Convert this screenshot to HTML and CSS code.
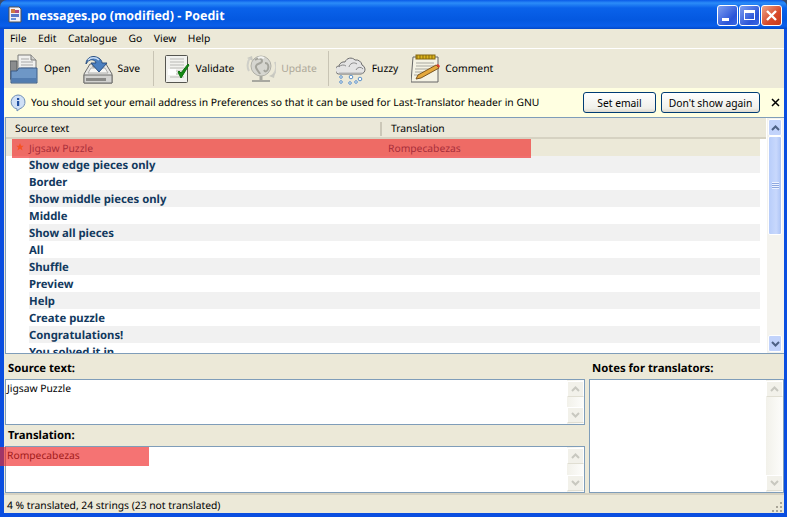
FILE: index.html
```html
<!DOCTYPE html>
<html lang="en">
<head>
    <meta charset="UTF-8">
    <title>messages.po (modified) - Poedit</title>
    <link rel="stylesheet" href="styles.css">
</head>
<body>
<div class="window">
    <div class="titlebar">
        <svg class="app-icon" width="16" height="18" viewBox="0 0 16 18">
            <path d="M2 1h10l2 2v13H2z" fill="#f2f0f8" stroke="#56524e"/>
            <rect x="4" y="3" width="4" height="4" fill="#d07a40"/>
            <rect x="8" y="4" width="4" height="3" fill="#b04a80"/>
            <rect x="4" y="8" width="8" height="3" fill="#5a78c8"/>
            <rect x="4" y="12" width="5" height="2" fill="#6a90d8"/>
        </svg>
        <span class="title">messages.po (modified) - Poedit</span>
        <div class="winbtns">
            <div class="winbtn"><span class="glyph-min"></span></div>
            <div class="winbtn"><span class="glyph-max"></span></div>
            <div class="winbtn close">
                <svg width="13" height="13" viewBox="0 0 13 13"><path d="M2 2l9 9M11 2l-9 9" stroke="#fff" stroke-width="2.4"/></svg>
            </div>
        </div>
    </div>
    <div class="client">
        <div class="menubar">
            <span>File</span><span>Edit</span><span>Catalogue</span><span>Go</span><span>View</span><span>Help</span>
        </div>
        <div class="toolbar">
            <div class="tool tool-open">
                <svg width="28" height="30" viewBox="0 0 28 30">
                    <path d="M0 7h7v18H0z" fill="#8a8c8e" stroke="#55585c"/>
                    <path d="M8 1h13l5 5v14H8z" fill="#f0f0ee" stroke="#7a7a78"/>
                    <path d="M21 1v5h5" fill="#d0d0cc" stroke="#7a7a78"/>
                    <path d="M11 5h8M11 8h12M11 11h12M11 14h12" stroke="#a8a8a8"/>
                    <path d="M1 17h6l2-3h18v15H1z" fill="#6e97c6" stroke="#3d5c86"/>
                    <path d="M2 24h24v4H2z" fill="#527cb0"/>
                </svg>
                <span>Open</span>
            </div>
            <div class="tool tool-save">
                <svg width="30" height="30" viewBox="0 0 30 30">
                    <path d="M1 20l6-10h3v3h10v-3h3l6 10v9H1z" fill="#e6e6e4" stroke="#6e6e6c"/>
                    <path d="M5 19h20l-3-5H8z" fill="#f6f6f4" stroke="#b0b0ae"/>
                    <path d="M1 21h28v8H1z" fill="#d2d2d0" stroke="#6e6e6c"/>
                    <rect x="3" y="24" width="20" height="3" fill="#8a8a88"/>
                    <path d="M3 10C3 3 11 0 17 5c1 1 2 2 2 4h5l-8 9-8-9h5c-1-4-7-5-10 1z" fill="#4a7fc0" stroke="#2a4f80"/>
                    <path d="M5 6c3-3 8-3 11 0" fill="none" stroke="#c8dcf4" stroke-width="1.500"/>
                </svg>
                <span>Save</span>
            </div>
            <div class="sep sep-save"></div>
            <div class="tool tool-validate">
                <svg width="25" height="28" viewBox="0 0 25 28">
                    <rect x="0.500" y="0.500" width="22" height="27" rx="1" fill="#f2f2ee" stroke="#55554f"/>
                    <path d="M5 4h14M5 7h14M5 10h14M5 13h14M5 16h14M5 19h14M5 22h14" stroke="#b8b8b4"/>
                    <rect x="3" y="14" width="8" height="6" fill="#fff"/>
                    <path d="M13 17l3 6 8-13-1-1-7 9-2-2z" fill="#128a12" stroke="#0e700e"/>
                </svg>
                <span>Validate</span>
            </div>
            <div class="tool tool-update">
                <svg width="30" height="30" viewBox="0 0 30 30">
                    <path d="M1 4l5-2 1 5z" fill="#c8c8c0"/>
                    <path d="M4 4c-3 4-3 10-1 13M29 8c2 5 1 10-2 13" fill="none" stroke="#cfcfc8" stroke-width="2"/>
                    <path d="M29 19l-6 3 5 2z" fill="#c8c8c0"/>
                    <circle cx="15" cy="12" r="10" fill="#d6d6d0" stroke="#b0b0a8"/>
                    <path d="M9 6c3-2 7-2 7 1s-5 2-6 5 3 5 4 8M19 9c3 0 4 3 3 6s-3 3-4 1" fill="none" stroke="#a4a49c" stroke-width="2"/>
                    <path d="M12 4c2-1 4-1 6 0" fill="none" stroke="#f4f4f0" stroke-width="2"/>
                    <path d="M15 22v4" stroke="#a8a8a0" stroke-width="3"/>
                    <path d="M6 27h18" stroke="#a8a8a0" stroke-width="2"/>
                </svg>
                <span>Update</span>
            </div>
            <div class="sep sep-fuzzy"></div>
            <div class="tool tool-fuzzy">
                <svg width="30" height="32" viewBox="0 0 30 32">
                    <path d="M4 21a4 4 0 0 1-1-8a5 5 0 0 1 6-4a6 6 0 0 1 10-2a6 6 0 0 1 7 5a5 5 0 0 1 3 4a5 5 0 0 1-4 5z" fill="#e4e4e4" stroke="#6e6e6e"/>
                    <path d="M3 14a5 5 0 0 1 7-1M13 14a5 5 0 0 1 8-3M20 17a4 4 0 0 1 7-1" fill="none" stroke="#8a8a8a"/>
                    <path d="M3 20h24" stroke="#b4b4b4"/>
                    <g fill="#fff" stroke="#5a90c8">
                        <circle cx="5" cy="24" r="1.300"/><circle cx="15" cy="24" r="1.800"/><circle cx="24" cy="26" r="1.800"/>
                        <circle cx="5" cy="29" r="1.300"/><circle cx="14" cy="30" r="1.300"/><circle cx="20" cy="29" r="1.300"/>
                    </g>
                </svg>
                <span>Fuzzy</span>
            </div>
            <div class="tool tool-comment">
                <svg width="29" height="29" viewBox="0 0 29 29">
                    <path d="M2 3h25v25H0z" fill="#f4f2e4" stroke="#666"/>
                    <rect x="5" y="1" width="19" height="4" fill="#dcb41c" stroke="#86680e"/>
                    <path d="M6 1v4M9 1v4M12 1v4M15 1v4M18 1v4M21 1v4" stroke="#86680e"/>
                    <path d="M5 9h18M5 12h18M4 15h14M4 18h10M3 21h8" stroke="#a8a8a0"/>
                    <path d="M5 25l2-4 18-10 3 3-18 10z" fill="#e4a83c" stroke="#7a5520"/>
                    <path d="M25 11l3 3 1-2-2-2z" fill="#d84030"/>
                </svg>
                <span>Comment</span>
            </div>
        </div>
        <div class="infobar">
            <svg class="info-icon" width="16" height="18" viewBox="0 0 16 18">
                <path d="M8 1a7 7 0 0 1 2 13.700L7 17v-2.100A7 7 0 0 1 8 1z" fill="#cfe0f6" stroke="#6f8fb8"/>
                <rect x="7" y="4" width="2.200" height="2" fill="#1f4f9f"/>
                <rect x="7" y="7" width="2.200" height="5" fill="#1f4f9f"/>
            </svg>
            <span class="info-text">You should set your email address in Preferences so that it can be used for Last-Translator header in GNU</span>
            <button class="xp-btn btn-email">Set email</button>
            <button class="xp-btn btn-hide">Don't show again</button>
            <svg class="info-close" width="9" height="9" viewBox="0 0 9 9"><path d="M1 1l7 7M8 1l-7 7" stroke="#000" stroke-width="1.500"/></svg>
        </div>
        <div class="list">
            <div class="list-main">
                <div class="list-head">
                    <div class="col-source">Source text</div>
                    <div class="col-trans">Translation</div>
                </div>
                <div class="rows">
                    <div class="row selected">
                        <svg class="star" width="8" height="8" viewBox="0 0 9 9"><path d="M4.500 0l1.300 3h3L6.400 5l1 3.500-2.900-2-2.900 2 1-3.500L.2 3h3z" fill="#ffa020"/></svg>
                        <span class="cell-source">Jigsaw Puzzle</span>
                        <span class="cell-trans">Rompecabezas</span>
                    </div>
                    <div class="row alt"><span class="cell-source">Show edge pieces only</span></div>
                    <div class="row"><span class="cell-source">Border</span></div>
                    <div class="row alt"><span class="cell-source">Show middle pieces only</span></div>
                    <div class="row"><span class="cell-source">Middle</span></div>
                    <div class="row alt"><span class="cell-source">Show all pieces</span></div>
                    <div class="row"><span class="cell-source">All</span></div>
                    <div class="row alt"><span class="cell-source">Shuffle</span></div>
                    <div class="row"><span class="cell-source">Preview</span></div>
                    <div class="row alt"><span class="cell-source">Help</span></div>
                    <div class="row"><span class="cell-source">Create puzzle</span></div>
                    <div class="row alt"><span class="cell-source">Congratulations!</span></div>
                    <div class="row"><span class="cell-source">You solved it in</span></div>
                    <div class="mark mark-row"></div>
                </div>
            </div>
            <div class="scroll scroll-list">
                <div class="sb-btn"><svg width="9" height="6" viewBox="0 0 9 6"><path d="M1 5l3.500-3.500L8 5" fill="none" stroke="#4d6185" stroke-width="2"/></svg></div>
                <div class="sb-thumb"><div class="grip"></div></div>
                <div class="sb-fill"></div>
                <div class="sb-btn"><svg width="9" height="6" viewBox="0 0 9 6"><path d="M1 1l3.500 3.500L8 1" fill="none" stroke="#4d6185" stroke-width="2"/></svg></div>
            </div>
        </div>
        <div class="editor">
            <div class="edit-left">
                <div class="edit-label">Source text:</div>
                <div class="box box-source">
                    <div class="box-text">Jigsaw Puzzle</div>
                    <div class="scroll-off">
                        <div class="off-btn"><svg width="9" height="6" viewBox="0 0 9 6"><path d="M1 5l3.500-3.500L8 5" fill="none" stroke="#c8c8c0" stroke-width="2"/></svg></div>
                        <div class="off-btn"><svg width="9" height="6" viewBox="0 0 9 6"><path d="M1 1l3.500 3.500L8 1" fill="none" stroke="#c8c8c0" stroke-width="2"/></svg></div>
                    </div>
                </div>
                <div class="edit-label label-trans">Translation:</div>
                <div class="box box-trans">
                    <div class="box-text">Rompecabezas</div>
                    <div class="scroll-off">
                        <div class="off-btn"><svg width="9" height="6" viewBox="0 0 9 6"><path d="M1 5l3.500-3.500L8 5" fill="none" stroke="#c8c8c0" stroke-width="2"/></svg></div>
                        <div class="off-btn"><svg width="9" height="6" viewBox="0 0 9 6"><path d="M1 1l3.500 3.500L8 1" fill="none" stroke="#c8c8c0" stroke-width="2"/></svg></div>
                    </div>
                    <div class="mark mark-trans"></div>
                </div>
            </div>
            <div class="edit-right">
                <div class="edit-label">Notes for translators:</div>
                <div class="box box-notes">
                    <div class="box-text"></div>
                    <div class="scroll-off">
                        <div class="off-btn"><svg width="9" height="6" viewBox="0 0 9 6"><path d="M1 5l3.500-3.500L8 5" fill="none" stroke="#c8c8c0" stroke-width="2"/></svg></div>
                        <div class="off-btn"><svg width="9" height="6" viewBox="0 0 9 6"><path d="M1 1l3.500 3.500L8 1" fill="none" stroke="#c8c8c0" stroke-width="2"/></svg></div>
                    </div>
                </div>
            </div>
        </div>
        <div class="statusbar">
            <span>4 % translated, 24 strings (23 not translated)</span>
            <svg class="grip-corner" width="11" height="11" viewBox="0 0 11 11" fill="#a8a496">
                <rect x="8" y="0" width="2" height="2"/><rect x="4" y="4" width="2" height="2"/><rect x="8" y="4" width="2" height="2"/>
                <rect x="0" y="8" width="2" height="2"/><rect x="4" y="8" width="2" height="2"/><rect x="8" y="8" width="2" height="2"/>
            </svg>
        </div>
    </div>
</div>
</body>
</html>
```

FILE: styles.css
```css
html, body {
    margin: 0;
    padding: 0;
}
body {
    font-family: "Noto Sans", sans-serif;
    font-size: 10.3px;
    text-rendering: geometricPrecision;
    color: #000;
}
.window {
    width: 787px;
    height: 517px;
    display: flex;
    flex-direction: column;
    background: linear-gradient(#3a4a6a 0 8px, #0a4ee0 8px);
    overflow: hidden;
}
.titlebar {
    height: 29px;
    display: flex;
    align-items: center;
    padding: 0 5px 0 7px;
    border-radius: 7px 7px 0 0;
    background: linear-gradient(#0a5ae8 0, #2b8cf8 3px, #0a62ea 8px, #0458e0 20px, #0a5eea 26px, #0348c8 29px);
    flex-shrink: 0;
}
.app-icon {
    margin-right: 4px;
}
.title {
    font-family: "Open Sans", sans-serif;
    font-weight: 700;
    font-size: 12.5px;
    padding-top: 2px;
    color: #fff;
    flex: 1;
}
.winbtns {
    display: flex;
    gap: 1px;
    margin-top: 1px;
}
.winbtn {
    width: 21px;
    height: 21px;
    box-sizing: border-box;
    border: 1px solid #fff;
    border-radius: 3px;
    background: linear-gradient(135deg, #7f9ff0, #2a54d8 70%, #3a68e4);
    display: flex;
    align-items: center;
    justify-content: center;
}
.winbtn.close {
    background: linear-gradient(135deg, #eca488, #d8492a 60%, #c83a1a);
}
.glyph-min {
    width: 7px;
    height: 3px;
    background: #fff;
    margin-top: 9px;
    margin-right: 5px;
}
.glyph-max {
    width: 11px;
    height: 10px;
    box-sizing: border-box;
    border: 1px solid #fff;
    border-top-width: 3px;
}
.client {
    flex: 1;
    margin: 0 3px 4px 4px;
    background: #ece9d8;
    display: flex;
    flex-direction: column;
    min-height: 0;
}
.menubar {
    height: 19px;
    padding-left: 6px;
    display: flex;
    align-items: center;
    gap: 11.5px;
    border-bottom: 1px solid #fff;
    flex-shrink: 0;
}
.toolbar {
    height: 39px;
    display: flex;
    align-items: center;
    padding-left: 6px;
    flex-shrink: 0;
}
.tool {
    display: flex;
    align-items: center;
    gap: 6px;
}
.tool-save {
    margin-left: 12px;
    gap: 5px;
}
.tool-update {
    margin-left: 12px;
    gap: 5px;
    color: #aca899;
}
.tool-comment {
    margin-left: 13px;
    gap: 5px;
}
.sep {
    width: 1px;
    height: 35px;
    background: #c8c4b4;
    margin: 0 11px;
}
.sep-save {
    margin-left: 12.5px;
}
.sep-fuzzy {
    margin: 0 7px 0 11px;
}
.infobar {
    height: 29px;
    display: flex;
    align-items: center;
    background: #ffffe1;
    padding-left: 6px;
    flex-shrink: 0;
}
.info-text {
    margin-left: 5px;
    flex: 1;
}
.xp-btn {
    font: inherit;
    height: 21px;
    padding: 0;
    border: 1px solid #003c74;
    border-radius: 3px;
    background: linear-gradient(#fff, #f0f0ea 80%, #dcd8ce);
    color: #000;
}
.btn-email {
    width: 73px;
    margin-right: 5px;
}
.btn-hide {
    width: 99px;
    margin-right: 11px;
}
.info-close {
    margin-right: 4px;
}
.list {
    height: 237px;
    box-sizing: border-box;
    display: flex;
    background: #fff;
    border: 1px solid #7f9db9;
    border-right: 0;
    margin-left: 1px;
    flex-shrink: 0;
}
.list-main {
    flex: 1;
    min-width: 0;
    overflow: hidden;
    display: flex;
    flex-direction: column;
}
.list-head {
    height: 21px;
    display: flex;
    align-items: center;
    box-sizing: border-box;
    padding-top: 3px;
    background: #ebe8d9;
    border-bottom: 2px solid #d6d2c2;
    flex-shrink: 0;
    margin-right: 1px;
}
.col-source {
    width: 376px;
    padding-left: 9px;
    box-sizing: border-box;
    border-right: 2px solid #cbc7b8;
}
.col-trans {
    padding-left: 9px;
}
.rows {
    flex: 1;
    min-height: 0;
    overflow: hidden;
    position: relative;
}
.row {
    height: 17px;
    display: flex;
    align-items: center;
    font-weight: 700;
    font-size: 11.3px;
    color: #12395e;
    position: relative;
    width: 754px;
    box-sizing: border-box;
    padding: 2px 0 0 23px;
}
.row.alt {
    background: #f1f1f1;
    margin-left: 23px;
    padding-left: 0;
    width: 731px;
}
.row.selected {
    background: #ece9d8;
    font-weight: 400;
    font-size: 10.3px;
}
.star {
    position: absolute;
    left: 10px;
    top: 4px;
}
.cell-source {
    width: 359px;
}
.mark {
    position: absolute;
    background: rgba(240, 40, 40, 0.65);
    pointer-events: none;
}
.mark-row {
    left: 6px;
    top: 0;
    width: 519px;
    height: 19px;
}
.scroll {
    width: 17px;
    box-sizing: border-box;
    display: flex;
    flex-direction: column;
    padding: 1px 2px 1px 1px;
    background: #f4f3ee;
    flex-shrink: 0;
}
.sb-btn {
    height: 17px;
    box-sizing: border-box;
    border: 1px solid #fff;
    border-radius: 2px;
    background: #c2d3fb;
    display: flex;
    align-items: center;
    justify-content: center;
    flex-shrink: 0;
}
.sb-thumb {
    height: 99px;
    box-sizing: border-box;
    border: 1px solid #fff;
    border-radius: 2px;
    background: linear-gradient(90deg, #b8cdfa, #c8d8fc 60%, #adc4f6);
    display: flex;
    align-items: center;
    justify-content: center;
    flex-shrink: 0;
}
.grip {
    width: 7px;
    height: 7px;
    background: repeating-linear-gradient(#eef3ff 0 1px, #8ea8e0 1px 2px);
}
.sb-fill {
    flex: 1;
}
.editor {
    flex: 1;
    min-height: 0;
    display: flex;
    gap: 4px;
    padding-left: 1px;
}
.edit-left {
    width: 580px;
    display: flex;
    flex-direction: column;
    flex-shrink: 0;
}
.edit-right {
    flex: 1;
    min-width: 0;
    display: flex;
    flex-direction: column;
}
.edit-label {
    height: 25px;
    box-sizing: border-box;
    padding: 7px 0 0 3px;
    font-weight: 700;
    font-size: 11.3px;
    color: #000;
}
.label-trans {
    height: 21px;
    padding-top: 3px;
}
.box {
    box-sizing: border-box;
    border: 1px solid #7f9db9;
    background: #fff;
    display: flex;
    position: relative;
}
.box-source {
    height: 46px;
}
.box-trans {
    height: 47px;
}
.box-notes {
    height: 114px;
}
.box-text {
    flex: 1;
    padding: 2px 1px;
    min-width: 0;
}
.scroll-off {
    width: 17px;
    display: flex;
    flex-direction: column;
    justify-content: space-between;
    background: linear-gradient(90deg, #f2f1ea, #fdfdfb);
    padding: 1px 0;
    flex-shrink: 0;
}
.off-btn {
    height: 16px;
    box-sizing: border-box;
    border: 1px solid #fff;
    border-bottom-color: #e0ded2;
    background: #f2f1ea;
    display: flex;
    align-items: center;
    justify-content: center;
}
.mark-trans {
    left: -6px;
    top: 0;
    width: 149px;
    height: 19px;
}
.statusbar {
    height: 20px;
    display: flex;
    align-items: center;
    justify-content: space-between;
    padding: 3px 0 0 3px;
    border-top: 2px solid #d6d2c2;
    box-sizing: border-box;
    flex-shrink: 0;
}
.grip-corner {
    margin-right: 1px;
    align-self: flex-end;
}
```
